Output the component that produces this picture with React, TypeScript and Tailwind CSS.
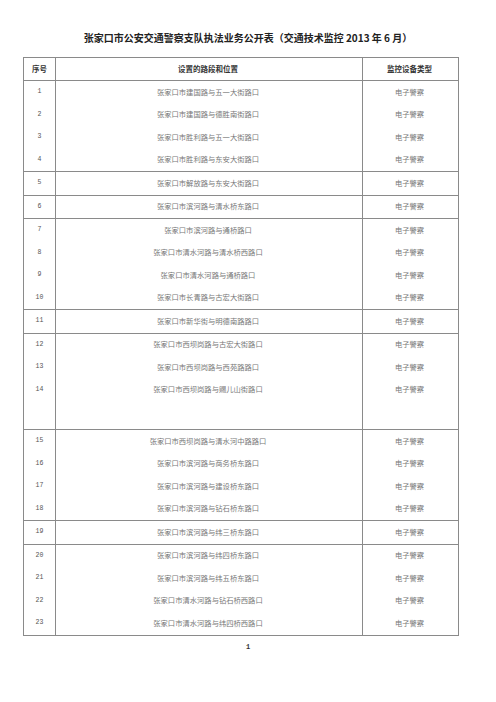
import React from 'react';

type Group = { rows: [string, string][]; blank?: boolean };

const groups: Group[] = [
  {
    rows: [
      ['1', '张家口市建国路与五一大街路口'],
      ['2', '张家口市建国路与德胜南街路口'],
      ['3', '张家口市胜利路与五一大街路口'],
      ['4', '张家口市胜利路与东安大街路口'],
    ],
  },
  { rows: [['5', '张家口市解放路与东安大街路口']] },
  { rows: [['6', '张家口市滨河路与清水桥东路口']] },
  {
    rows: [
      ['7', '张家口市滨河路与通桥路口'],
      ['8', '张家口市清水河路与清水桥西路口'],
      ['9', '张家口市清水河路与通桥路口'],
      ['10', '张家口市长青路与古宏大街路口'],
    ],
  },
  { rows: [['11', '张家口市新华街与明德南路路口']] },
  {
    rows: [
      ['12', '张家口市西坝岗路与古宏大街路口'],
      ['13', '张家口市西坝岗路与西苑路路口'],
      ['14', '张家口市西坝岗路与赐儿山街路口'],
    ],
    blank: true,
  },
  {
    rows: [
      ['15', '张家口市西坝岗路与清水河中路路口'],
      ['16', '张家口市滨河路与商务桥东路口'],
      ['17', '张家口市滨河路与建设桥东路口'],
      ['18', '张家口市滨河路与钻石桥东路口'],
    ],
  },
  { rows: [['19', '张家口市滨河路与纬三桥东路口']] },
  {
    rows: [
      ['20', '张家口市滨河路与纬四桥东路口'],
      ['21', '张家口市滨河路与纬五桥东路口'],
      ['22', '张家口市清水河路与钻石桥西路口'],
      ['23', '张家口市清水河路与纬四桥西路口'],
    ],
  },
];

const cjk = { fontFamily: '"Noto Sans CJK SC", "Noto Sans", sans-serif' };
const mono = { fontFamily: '"Liberation Mono", "DejaVu Sans Mono", monospace' };

function Row({ no, place }: { no: string; place: string }) {
  return (
    <div className="flex h-[22.5px] items-center">
      <div className="w-[31px] shrink-0 text-center text-[6.5px] text-[#555]" style={mono}>{no}</div>
      <div className="w-[306px] shrink-0 text-center text-[7.3px] text-[#777]">{place}</div>
      <div className="flex-1 text-center text-[7.3px] text-[#777]">电子警察</div>
    </div>
  );
}

export default function App() {
  return (
    <div className="w-[496px] h-[702px] bg-white" style={cjk}>
      <h1 className="pt-[32px] text-center text-[10px] leading-[12px] font-bold text-[#222]">
        张家口市公安交通警察支队执法业务公开表（交通技术监控 2013 年 6 月）
      </h1>

      <div className="relative ml-[23px] mt-[13px] w-[436px] border border-[#8a8a8a]">
        {/* column rules */}
        <div className="pointer-events-none absolute inset-y-0 left-[31px] w-px bg-[#8a8a8a]" />
        <div className="pointer-events-none absolute inset-y-0 left-[338px] w-px bg-[#8a8a8a]" />

        <div className="flex h-[23px] items-center border-b border-[#8a8a8a] text-[7.5px] font-bold text-[#333]">
          <div className="w-[31px] shrink-0 text-center">序号</div>
          <div className="w-[306px] shrink-0 text-center">设置的路段和位置</div>
          <div className="flex-1 text-center">监控设备类型</div>
        </div>

        {groups.map((g, i) => (
          <div key={i} className={i > 0 ? 'border-t border-[#8a8a8a]' : ''}>
            {g.rows.map(([no, place]) => (
              <Row key={no} no={no} place={place} />
            ))}
            {g.blank && <div className="h-[28px]" />}
          </div>
        ))}
      </div>

      <p className="mt-[6px] text-center text-[7px] font-bold text-[#333]" style={mono}>1</p>
    </div>
  );
}
